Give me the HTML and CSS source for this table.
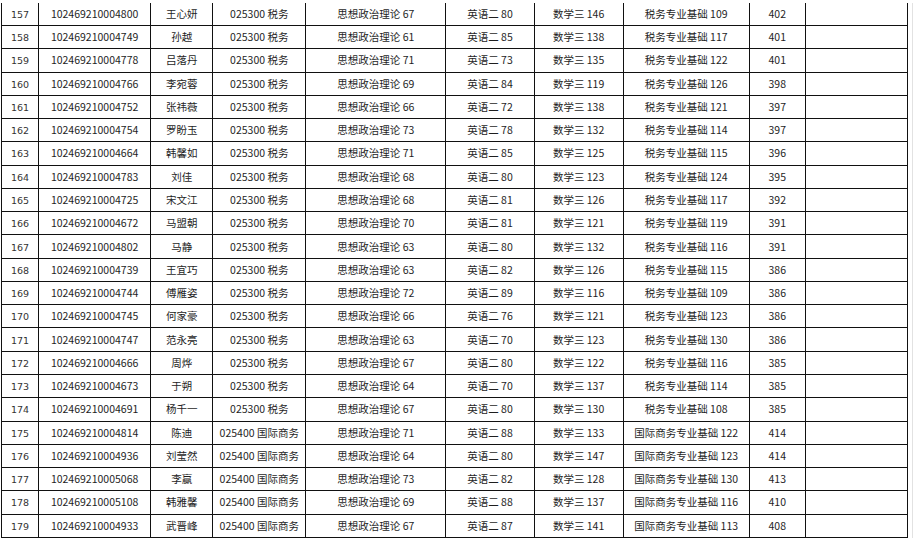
FILE: index.html
```html
<!DOCTYPE html>
<html lang="zh-CN">
<head>
<meta charset="utf-8">
<title>成绩表</title>
<link rel="stylesheet" href="styles.css">
</head>
<body>
<div class="sheet">
<table class="grid">
<colgroup>
<col class="c-no"><col class="c-id"><col class="c-name"><col class="c-major"><col class="c-pol"><col class="c-eng"><col class="c-math"><col class="c-pro"><col class="c-total"><col class="c-note"><col class="c-edge">
</colgroup>
<tbody>
<tr class="first"><td class="no">157</td><td>102469210004800</td><td>王心妍</td><td>025300 税务</td><td>思想政治理论 67</td><td>英语二 80</td><td>数学三 146</td><td>税务专业基础 109</td><td>402</td><td></td><td class="edge"></td></tr>
<tr><td class="no">158</td><td>102469210004749</td><td>孙越</td><td>025300 税务</td><td>思想政治理论 61</td><td>英语二 85</td><td>数学三 138</td><td>税务专业基础 117</td><td>401</td><td></td><td class="edge"></td></tr>
<tr><td class="no">159</td><td>102469210004778</td><td>吕落丹</td><td>025300 税务</td><td>思想政治理论 71</td><td>英语二 73</td><td>数学三 135</td><td>税务专业基础 122</td><td>401</td><td></td><td class="edge"></td></tr>
<tr><td class="no">160</td><td>102469210004766</td><td>李宛蓉</td><td>025300 税务</td><td>思想政治理论 69</td><td>英语二 84</td><td>数学三 119</td><td>税务专业基础 126</td><td>398</td><td></td><td class="edge"></td></tr>
<tr><td class="no">161</td><td>102469210004752</td><td>张祎薇</td><td>025300 税务</td><td>思想政治理论 66</td><td>英语二 72</td><td>数学三 138</td><td>税务专业基础 121</td><td>397</td><td></td><td class="edge"></td></tr>
<tr><td class="no">162</td><td>102469210004754</td><td>罗盼玉</td><td>025300 税务</td><td>思想政治理论 73</td><td>英语二 78</td><td>数学三 132</td><td>税务专业基础 114</td><td>397</td><td></td><td class="edge"></td></tr>
<tr><td class="no">163</td><td>102469210004664</td><td>韩馨如</td><td>025300 税务</td><td>思想政治理论 71</td><td>英语二 85</td><td>数学三 125</td><td>税务专业基础 115</td><td>396</td><td></td><td class="edge"></td></tr>
<tr><td class="no">164</td><td>102469210004783</td><td>刘佳</td><td>025300 税务</td><td>思想政治理论 68</td><td>英语二 80</td><td>数学三 123</td><td>税务专业基础 124</td><td>395</td><td></td><td class="edge"></td></tr>
<tr><td class="no">165</td><td>102469210004725</td><td>宋文江</td><td>025300 税务</td><td>思想政治理论 68</td><td>英语二 81</td><td>数学三 126</td><td>税务专业基础 117</td><td>392</td><td></td><td class="edge"></td></tr>
<tr><td class="no">166</td><td>102469210004672</td><td>马盟朝</td><td>025300 税务</td><td>思想政治理论 70</td><td>英语二 81</td><td>数学三 121</td><td>税务专业基础 119</td><td>391</td><td></td><td class="edge"></td></tr>
<tr><td class="no">167</td><td>102469210004802</td><td>马静</td><td>025300 税务</td><td>思想政治理论 63</td><td>英语二 80</td><td>数学三 132</td><td>税务专业基础 116</td><td>391</td><td></td><td class="edge"></td></tr>
<tr><td class="no">168</td><td>102469210004739</td><td>王宜巧</td><td>025300 税务</td><td>思想政治理论 63</td><td>英语二 82</td><td>数学三 126</td><td>税务专业基础 115</td><td>386</td><td></td><td class="edge"></td></tr>
<tr><td class="no">169</td><td>102469210004744</td><td>傅雁姿</td><td>025300 税务</td><td>思想政治理论 72</td><td>英语二 89</td><td>数学三 116</td><td>税务专业基础 109</td><td>386</td><td></td><td class="edge"></td></tr>
<tr><td class="no">170</td><td>102469210004745</td><td>何家豪</td><td>025300 税务</td><td>思想政治理论 66</td><td>英语二 76</td><td>数学三 121</td><td>税务专业基础 123</td><td>386</td><td></td><td class="edge"></td></tr>
<tr><td class="no">171</td><td>102469210004747</td><td>范永亮</td><td>025300 税务</td><td>思想政治理论 63</td><td>英语二 70</td><td>数学三 123</td><td>税务专业基础 130</td><td>386</td><td></td><td class="edge"></td></tr>
<tr><td class="no">172</td><td>102469210004666</td><td>周烨</td><td>025300 税务</td><td>思想政治理论 67</td><td>英语二 80</td><td>数学三 122</td><td>税务专业基础 116</td><td>385</td><td></td><td class="edge"></td></tr>
<tr><td class="no">173</td><td>102469210004673</td><td>于朔</td><td>025300 税务</td><td>思想政治理论 64</td><td>英语二 70</td><td>数学三 137</td><td>税务专业基础 114</td><td>385</td><td></td><td class="edge"></td></tr>
<tr><td class="no">174</td><td>102469210004691</td><td>杨千一</td><td>025300 税务</td><td>思想政治理论 67</td><td>英语二 80</td><td>数学三 130</td><td>税务专业基础 108</td><td>385</td><td></td><td class="edge"></td></tr>
<tr><td class="no">175</td><td>102469210004814</td><td>陈迪</td><td>025400 国际商务</td><td>思想政治理论 71</td><td>英语二 88</td><td>数学三 133</td><td>国际商务专业基础 122</td><td>414</td><td></td><td class="edge"></td></tr>
<tr><td class="no">176</td><td>102469210004936</td><td>刘莹然</td><td>025400 国际商务</td><td>思想政治理论 64</td><td>英语二 80</td><td>数学三 147</td><td>国际商务专业基础 123</td><td>414</td><td></td><td class="edge"></td></tr>
<tr><td class="no">177</td><td>102469210005068</td><td>李赢</td><td>025400 国际商务</td><td>思想政治理论 73</td><td>英语二 82</td><td>数学三 128</td><td>国际商务专业基础 130</td><td>413</td><td></td><td class="edge"></td></tr>
<tr><td class="no">178</td><td>102469210005108</td><td>韩雅馨</td><td>025400 国际商务</td><td>思想政治理论 69</td><td>英语二 88</td><td>数学三 137</td><td>国际商务专业基础 116</td><td>410</td><td></td><td class="edge"></td></tr>
<tr><td class="no">179</td><td>102469210004933</td><td>武晋峰</td><td>025400 国际商务</td><td>思想政治理论 67</td><td>英语二 87</td><td>数学三 141</td><td>国际商务专业基础 113</td><td>408</td><td></td><td class="edge"></td></tr>
</tbody>
</table>
</div>
</body>
</html>
```
FILE: styles.css
```css
html, body {
  margin: 0;
  padding: 0;
  background: #ffffff;
}
.sheet {
  padding: 3px 0 0 1px;
  overflow: hidden;
  height: 537px;
}
.grid {
  border-collapse: separate;
  border-spacing: 0;
  table-layout: fixed;
  width: 912px;
  font-family: "Noto Sans CJK SC", "Liberation Sans", sans-serif;
  font-size: 10.5px;
  color: #1e1e1e;
}
.grid tr {
  height: 23.27px;
}
.grid tr.first {
  height: 23px;
}
.grid td {
  padding: 0;
  text-align: center;
  vertical-align: middle;
  white-space: nowrap;
  overflow: hidden;
  border-right: 1px solid #111;
  border-bottom: 1px solid #111;
  line-height: 14px;
}
.grid td:first-child {
  border-left: 1px solid #111;
}
.grid td.no {
  font-family: "DejaVu Sans", sans-serif;
  font-size: 9.5px;
  padding-top: 2px;
  color: #333;
}
.grid td.edge {
  border-right: 1px solid #e2e2e2;
  border-bottom: none;
}
.c-no { width: 38px; }
.c-id { width: 112px; }
.c-name { width: 62px; }
.c-major { width: 93px; }
.c-pol { width: 140px; }
.c-eng { width: 88px; }
.c-math { width: 89px; }
.c-pro { width: 126px; }
.c-total { width: 56px; }
.c-note { width: 102px; }
.c-edge { width: 5px; }
```
